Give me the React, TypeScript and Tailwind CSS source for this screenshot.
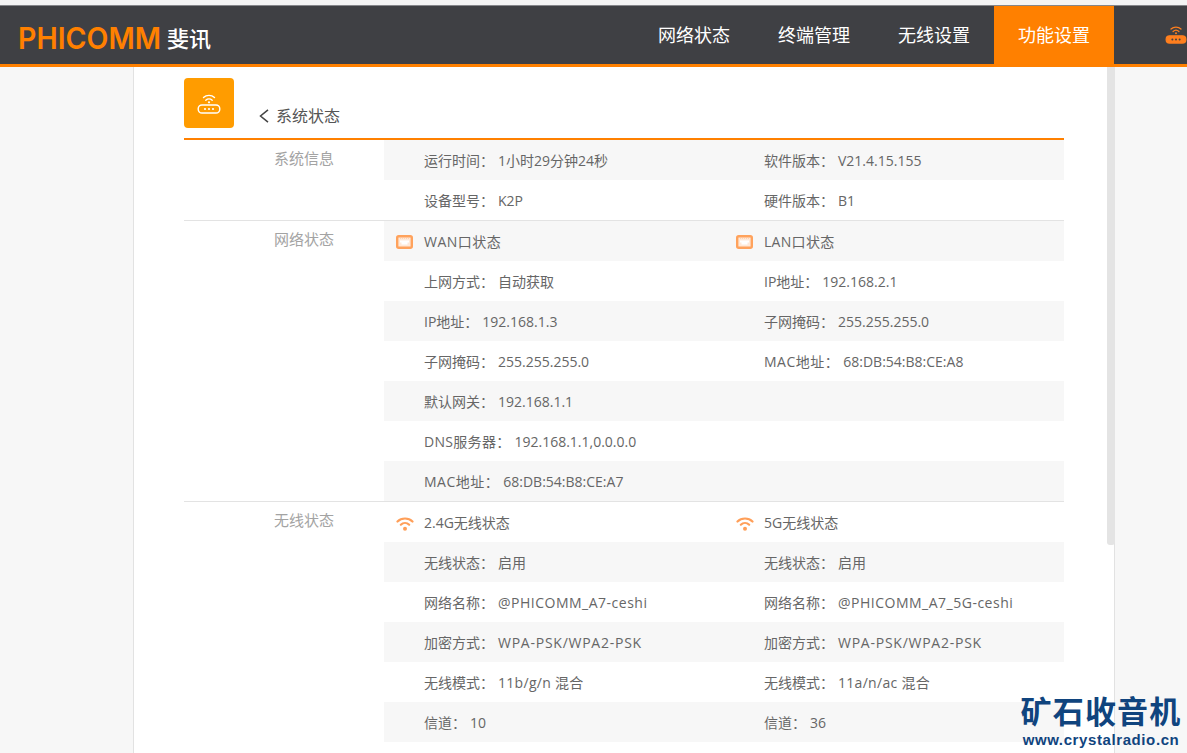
import type { ReactNode } from "react";

const FONT = "font-['Open_Sans','Noto_Sans_CJK_SC',sans-serif]";

const NAV_ITEMS = ["网络状态", "终端管理", "无线设置", "功能设置"];

type Cell = { label: string; value: string; labelClass?: string; valueClass?: string } | null;
type Row = { left: Cell; right: Cell };

const c = (label: string, value: string, valueClass = "", labelClass = "") => ({ label, value, valueClass, labelClass });

// latin capitals run a little wider in the original than in Open Sans
const MAC_LABEL = "tracking-[0.5px]";
const SSID = "tracking-[0.5px]";
const WPA = "tracking-[0.75px]";
const MODE = "tracking-[0.3px]";

const SYSTEM_ROWS: Row[] = [
  { left: c("运行时间：", "1小时29分钟24秒"), right: c("软件版本：", "V21.4.15.155") },
  { left: c("设备型号：", "K2P"), right: c("硬件版本：", "B1") },
];

const NETWORK_ROWS: Row[] = [
  { left: c("上网方式：", "自动获取"), right: c("IP地址：", "192.168.2.1") },
  { left: c("IP地址：", "192.168.1.3"), right: c("子网掩码：", "255.255.255.0") },
  { left: c("子网掩码：", "255.255.255.0"), right: c("MAC地址：", "68:DB:54:B8:CE:A8", "", MAC_LABEL) },
  { left: c("默认网关：", "192.168.1.1"), right: null },
  { left: c("DNS服务器：", "192.168.1.1,0.0.0.0", "", "tracking-[0.3px]"), right: null },
  { left: c("MAC地址：", "68:DB:54:B8:CE:A7", "", MAC_LABEL), right: null },
];

const WIRELESS_ROWS: Row[] = [
  { left: c("无线状态：", "启用"), right: c("无线状态：", "启用") },
  { left: c("网络名称：", "@PHICOMM_A7-ceshi", SSID), right: c("网络名称：", "@PHICOMM_A7_5G-ceshi", SSID) },
  { left: c("加密方式：", "WPA-PSK/WPA2-PSK", WPA), right: c("加密方式：", "WPA-PSK/WPA2-PSK", WPA) },
  { left: c("无线模式：", "11b/g/n 混合", MODE), right: c("无线模式：", "11a/n/ac 混合", MODE) },
  { left: c("信道：", "10"), right: c("信道：", "36") },
];

function RouterIcon({ className, filled }: { className?: string; filled?: boolean }) {
  return (
    <svg viewBox="0 0 24 22" className={className} fill="none" stroke="currentColor" strokeWidth="1.4">
      <path d="M6.5 5.5C9.5 2.6 14.500 2.600 17.500 5.500" strokeLinecap="round" />
      <path d="M8.800 8.200C10.600 6.500 13.400 6.500 15.200 8.200" strokeLinecap="round" />
      <circle cx="12" cy="10.300" r="1.100" fill="currentColor" stroke="none" />
      <rect x="1.200" y="13" width="21.600" height="8" rx="3.800" fill={filled ? "currentColor" : "none"} />
      <g fill={filled ? "#3f4044" : "currentColor"} stroke="none">
        <circle cx="8" cy="17" r="1.100" />
        <circle cx="12" cy="17" r="1.100" />
        <circle cx="16" cy="17" r="1.100" />
      </g>
    </svg>
  );
}

function PortIcon() {
  return (
    <svg viewBox="0 0 17 14" className="h-[14px] w-[17px] shrink-0">
      <rect x="1.200" y="1.200" width="14.600" height="11.600" rx="1.500" fill="#ffe9d8" stroke="#ffa25c" strokeWidth="2.400" />
      <path d="M4 5.500h9v2h-1.500v2h-6v-2H4z" fill="#fff" />
      <path d="M4 3.500h9" stroke="#ffd3b3" strokeWidth="1" strokeDasharray="1 1" />
    </svg>
  );
}

function WifiIcon() {
  return (
    <svg viewBox="0 0 18 15" className="h-[15px] w-[18px] shrink-0" fill="none" stroke="#ff9f59" strokeWidth="2.200" strokeLinecap="round">
      <path d="M1.500 5.500C5.500 1.500 12.500 1.500 16.500 5.500" />
      <path d="M4.800 8.700C7.200 6.400 10.800 6.400 13.200 8.700" />
      <circle cx="9" cy="12.800" r="2" fill="#ff9f59" stroke="none" />
    </svg>
  );
}

function InfoCell({ cell }: { cell: Cell }) {
  if (!cell) return <div className="w-[340px]" />;
  return (
    <div className="flex w-[340px] items-center whitespace-nowrap pl-10 pt-[2px] text-sm text-[#666]">
      <span className={cell.labelClass}>{cell.label}</span>
      <span className={`ml-1 ${cell.valueClass}`}>{cell.value}</span>
    </div>
  );
}

function InfoRow({ row, shaded }: { row: Row; shaded: boolean }) {
  return (
    <div className={`flex h-10 ${shaded ? "bg-[#f7f7f7]" : "bg-white"}`}>
      <InfoCell cell={row.left} />
      <InfoCell cell={row.right} />
    </div>
  );
}

function HeadCell({ icon, title, className }: { icon: ReactNode; title: string; className?: string }) {
  return (
    <div className="flex w-[340px] items-center whitespace-nowrap pl-3 pt-[2px] text-sm text-[#666]">
      <span className="flex w-7 items-center">{icon}</span>
      <span className={className}>{title}</span>
    </div>
  );
}

function Section({
  title,
  head,
  headShaded,
  rows,
  firstShaded,
  border,
}: {
  title: string;
  head?: ReactNode;
  headShaded?: boolean;
  rows: Row[];
  firstShaded: boolean;
  border?: boolean;
}) {
  return (
    <section className={`flex ${border ? "border-b border-[#e3e3e3]" : ""}`}>
      <div className="w-[200px] shrink-0 pl-[90px] pt-[8px] text-[15px] leading-5 text-[#a3a3a3]">{title}</div>
      <div className="w-[680px]">
        {head && <div className={`flex h-10 ${headShaded ? "bg-[#f7f7f7]" : "bg-white"}`}>{head}</div>}
        {rows.map((row, i) => (
          <InfoRow key={i} row={row} shaded={(i % 2 === 0) === firstShaded} />
        ))}
      </div>
    </section>
  );
}

export default function App() {
  return (
    <div className={`relative flex h-[753px] w-[1187px] flex-col overflow-hidden bg-[#f7f7f7] ${FONT}`}>
      <div className="h-[5px] shrink-0 bg-[#f4f4f4]" />
      <header className="flex h-[62px] shrink-0 items-stretch border-t border-[#85868a] border-b-[3px] border-b-[#ff8000] bg-[#3f4044]">
        <div className="flex items-center pl-[18px] pt-[5px]">
          <span className="w-[149px] origin-left scale-x-[0.95] font-['Inter'] text-[30px] leading-none font-semibold text-[#ff8000]">PHICOMM</span>
          <span className="text-[22px] leading-none font-medium text-white">斐讯</span>
        </div>
        <nav className="ml-auto flex">
          {NAV_ITEMS.map((item, i) => (
            <a
              key={item}
              className={`flex w-[120px] items-center justify-center text-lg ${i === 3 ? "bg-[#ff8000] text-white" : "text-white"}`}
            >
              {item}
            </a>
          ))}
        </nav>
        <div className="flex w-[73px] items-center justify-start pl-[51px]">
          <RouterIcon filled className="mb-[2px] h-[20px] w-[22px] shrink-0 text-[#ff7f1e]" />
        </div>
      </header>

      <main className="ml-[133px] w-[982px] flex-1 border-x border-[#e2e2e2] bg-white pl-[50px]">
        <div className="flex h-[73px] w-[880px] items-end border-b-2 border-[#ff8000] pb-[11px]">
          <div className="mt-[11px] flex h-[50px] w-[50px] items-center justify-center self-start rounded-[4px] bg-[#ff9c00]">
            <RouterIcon className="h-[22px] w-6 text-white" />
          </div>
          <svg viewBox="0 0 10 14" className="mb-[4px] ml-[25px] h-[14px] w-[10px] text-[#444]" fill="none" stroke="currentColor" strokeWidth="1.500">
            <path d="M9 0.800 1.500 7 9 13.200" />
          </svg>
          <span className="ml-[7px] text-base leading-[22px] text-[#555]">系统状态</span>
        </div>
        <div className="w-[880px]">
          <Section title="系统信息" rows={SYSTEM_ROWS} firstShaded border />
          <Section
            title="网络状态"
            headShaded
            head={
              <>
                <HeadCell icon={<PortIcon />} title="WAN口状态" className="tracking-[0.5px]" />
                <HeadCell icon={<PortIcon />} title="LAN口状态" className="tracking-[0.3px]" />
              </>
            }
            rows={NETWORK_ROWS}
            firstShaded={false}
            border
          />
          <Section
            title="无线状态"
            head={
              <>
                <HeadCell icon={<WifiIcon />} title="2.4G无线状态" />
                <HeadCell icon={<WifiIcon />} title="5G无线状态" />
              </>
            }
            rows={WIRELESS_ROWS}
            firstShaded
          />
        </div>
      </main>

      {/* scrollbar thumb */}
      <div className="absolute left-[1107px] top-[67px] h-[478px] w-[8px] rounded-b-[3px] bg-[#e4e4e4]" />

      {/* watermark */}
      <div className="absolute left-[1021px] top-[693px] flex w-[160px] flex-col items-center font-['Noto_Sans_CJK_SC','Liberation_Sans',sans-serif]">
        <span className="text-[31px] leading-[34px] font-bold tracking-[1.200px] whitespace-nowrap text-[#10447e]">矿石收音机</span>
        <span className="mt-[4px] font-['Liberation_Sans',sans-serif] text-[15px] leading-[18px] font-bold tracking-[0.600px] whitespace-nowrap text-[#10447e]">www.crystalradio.cn</span>
      </div>
    </div>
  );
}
